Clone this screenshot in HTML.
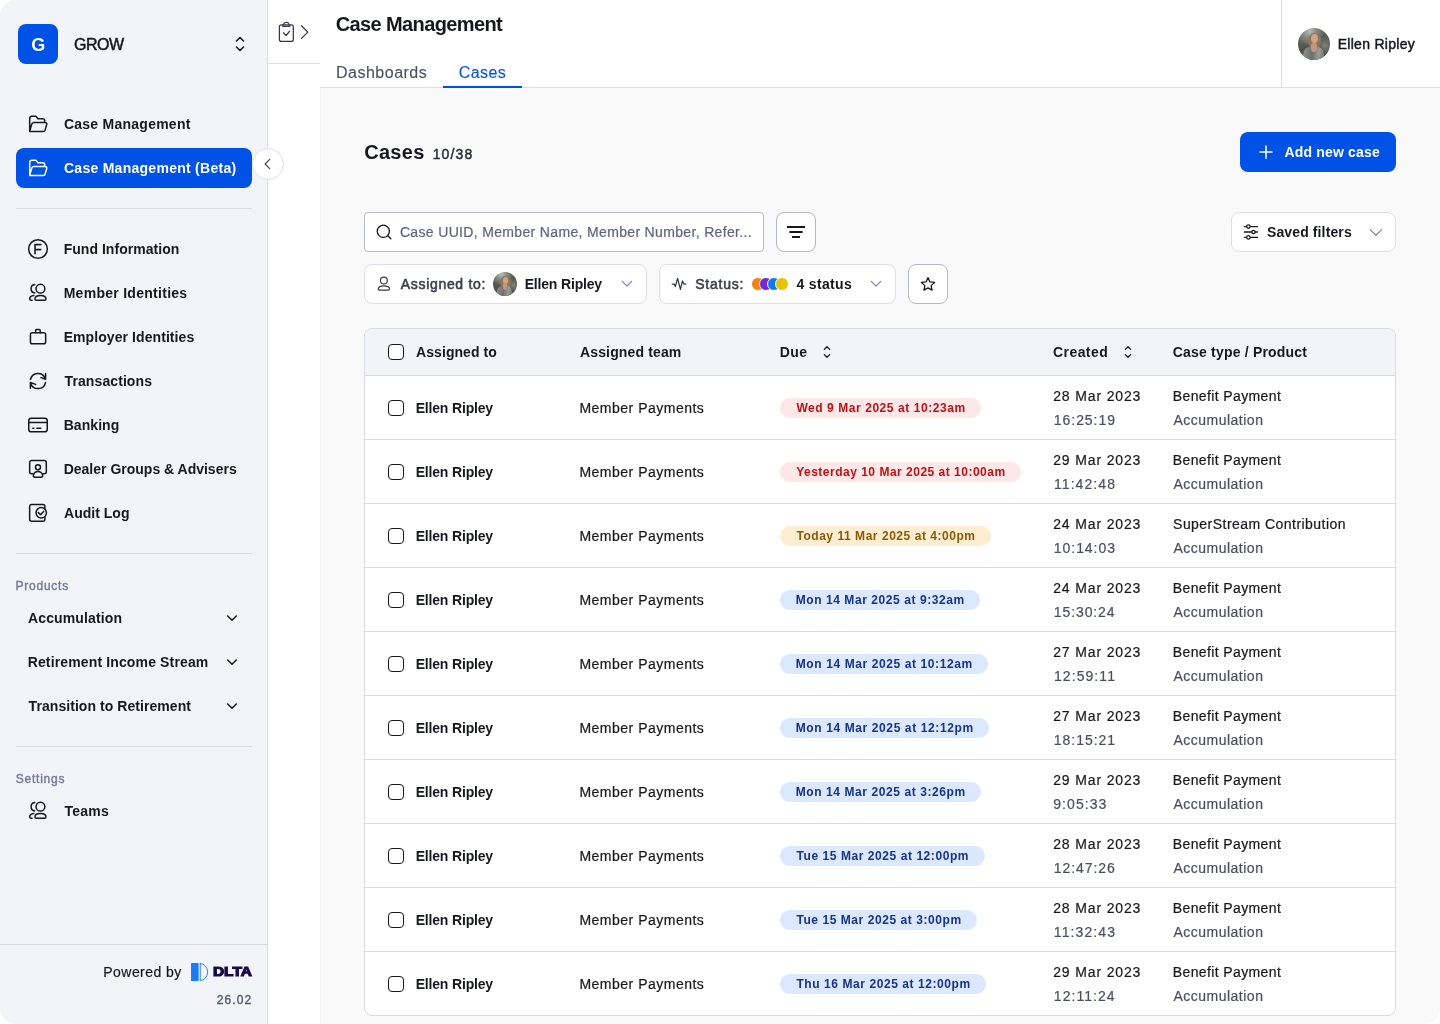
<!DOCTYPE html>
<html lang="en">
<head>
<meta charset="utf-8">
<title>Case Management</title>
<style>
*{box-sizing:border-box;margin:0;padding:0}
html,body{width:1440px;height:1024px;overflow:hidden;background:#fff}
body{font-family:"Liberation Sans",sans-serif;color:#16181d;font-size:14px}
#app{will-change:transform;position:relative;width:1440px;height:1024px;border-radius:16px;overflow:hidden;background:#f9f9fa}
.a,.t,svg{position:absolute}
.t{white-space:nowrap;line-height:20px;height:20px}
.b{font-weight:bold}
.n{-webkit-text-stroke:.2px currentColor}
svg{overflow:visible;fill:none;stroke:#16181d;stroke-width:1.5;stroke-linecap:round;stroke-linejoin:round}
#side{left:0;top:0;width:268px;height:1024px;background:#f3f4f8;border-right:1px solid #dadce4}
#logo{left:18px;top:24px;width:40px;height:40px;border-radius:8px;background:#0052e6}
.hr{position:absolute;left:16px;width:236px;height:1px;background:#dcdde5}
#sel{left:16px;top:148px;width:236px;height:40px;border-radius:8px;background:#0052e6}
#col{left:252px;top:148px;width:32px;height:32px;border-radius:50%;background:#fff;border:1px solid #dddfe6}
#mini{left:268px;top:0;width:52px;height:1024px;background:#fff}
#minib{left:268px;top:63px;width:52px;height:1px;background:#dddfe6}
#head{left:320px;top:0;width:1120px;height:88px;background:#fff;border-bottom:1px solid #dddfe6}
#user{left:1281px;top:0;width:1px;height:87px;background:#dddfe6}
.box{background:#fff;border:1px solid #dddfe6;border-radius:8px;height:40px}
.av{border-radius:50%;overflow:hidden;background:radial-gradient(circle at 36% 10%,#b9beb7 0,#858b82 20%,rgba(96,102,93,0) 42%),radial-gradient(circle at 85% 55%,#7c8279 0,rgba(80,85,78,0) 30%),linear-gradient(160deg,#6d7369,#4d524a 55%,#3f423d)}
.av i{position:absolute;display:block}
.v1{left:31%;top:15%;width:42%;height:50%;border-radius:50%;background:#8f7557}
.v2{left:41%;top:19%;width:23%;height:29%;border-radius:50%;background:#cfa488}
.v3{left:17%;top:56%;width:64%;height:60%;border-radius:45% 45% 0 0;background:linear-gradient(100deg,#8f9291,#6c6f6e 45%,#9a9c9b 70%,#6a6c6b)}
.v4{left:42%;top:46%;width:17%;height:30%;border-radius:30% 30% 50% 50%;background:#c69678}
.dot{top:277px;width:14px;height:14px;border-radius:50%;border:1px solid #fff}
.cb{left:388px;width:16px;height:16px;border:1.5px solid #16181d;border-radius:4px;background:#fff}
.ln{left:365px;width:1030px;height:1px;background:#dadce4}
.bd{left:780px;height:20px;border-radius:10px}
.r{background:#fde7e7}
.y{background:#fdedd1}
.u{background:#dce8fd}
</style>
</head>
<body>
<div id="app">
<div id="side" class="a"></div>
<div id="logo" class="a"></div>
<div class="t b" style="left:31.20px;top:35px;font-size:18px;color:#fff;">G</div>
<div class="t" style="left:74.05px;top:35px;font-size:16px;-webkit-text-stroke:0.5px currentColor;letter-spacing:-0.50px;">GROW</div>
<div id="sel" class="a"></div>
<div class="t b" style="left:63.95px;top:114px;letter-spacing:0.25px;">Case Management</div>
<div class="t b" style="left:63.98px;top:158px;color:#fff;letter-spacing:0.27px;">Case Management (Beta)</div>
<div class="t b" style="left:63.65px;top:239px;letter-spacing:0.04px;">Fund Information</div>
<div class="t b" style="left:63.65px;top:283px;letter-spacing:0.28px;">Member Identities</div>
<div class="t b" style="left:63.65px;top:327px;letter-spacing:0.08px;">Employer Identities</div>
<div class="t b" style="left:64.58px;top:371px;letter-spacing:0.09px;">Transactions</div>
<div class="t b" style="left:63.65px;top:415px;letter-spacing:0.07px;">Banking</div>
<div class="t b" style="left:63.70px;top:459px;">Dealer Groups &amp; Advisers</div>
<div class="t b" style="left:64.10px;top:503px;letter-spacing:0.01px;">Audit Log</div>
<div class="t b" style="left:64.45px;top:801px;letter-spacing:0.25px;">Teams</div>
<div class="hr" style="top:208px"></div>
<div class="hr" style="top:553px"></div>
<div class="hr" style="top:746px"></div>
<div class="t" style="left:15.43px;top:578px;font-size:12px;line-height:16px;height:16px;color:#727b98;-webkit-text-stroke:0.4px currentColor;letter-spacing:0.78px;">Products</div>
<div class="t" style="left:15.70px;top:771px;font-size:12px;line-height:16px;height:16px;color:#727b98;-webkit-text-stroke:0.4px currentColor;letter-spacing:0.78px;">Settings</div>
<div class="t b" style="left:28.06px;top:608px;letter-spacing:0.12px;">Accumulation</div>
<div class="t b" style="left:27.66px;top:652px;letter-spacing:0.14px;">Retirement Income Stream</div>
<div class="t b" style="left:28.59px;top:696px;letter-spacing:0.06px;">Transition to Retirement</div>
<div class="a" style="left:0;top:944px;width:267px;height:1px;background:#d9dbe3"></div>
<div class="t n" style="left:103.30px;top:962px;letter-spacing:0.45px;">Powered by</div>
<div class="t" style="left:216.77px;top:992px;font-size:12px;line-height:16px;height:16px;color:#545a6e;-webkit-text-stroke:0.35px currentColor;letter-spacing:1.12px;">26.02</div>
<div id="mini" class="a"></div><div id="minib" class="a"></div><div id="col" class="a"></div>
<div id="head" class="a"></div><div id="user" class="a"></div><div class="a" style="left:320px;top:88px;width:1px;height:936px;background:#f2f2f4"></div>
<div class="a av" style="left:1298px;top:28px;width:32px;height:32px"><i class="v1"></i><i class="v2"></i><i class="v3"></i><i class="v4"></i></div>
<div class="t b" style="left:335.70px;top:12px;font-size:20px;line-height:24px;height:24px;letter-spacing:-0.61px;">Case Management</div>
<div class="t" style="left:336.05px;top:63px;font-size:16px;color:#4b4f5c;-webkit-text-stroke:0.1px currentColor;letter-spacing:0.49px;">Dashboards</div>
<div class="t" style="left:458.74px;top:63px;font-size:16px;color:#0052e6;-webkit-text-stroke:0.1px currentColor;letter-spacing:0.41px;">Cases</div>
<div class="a" style="left:443px;top:86px;width:79px;height:2px;background:#0052e6"></div>
<div class="t" style="left:1337.66px;top:34px;-webkit-text-stroke:0.45px currentColor;letter-spacing:0.29px;">Ellen Ripley</div>
<div class="t b" style="left:364.20px;top:140px;font-size:20px;line-height:24px;height:24px;letter-spacing:0.29px;">Cases</div>
<div class="t" style="left:432.72px;top:144px;color:#2a2d36;-webkit-text-stroke:0.45px currentColor;letter-spacing:1.11px;">10/38</div>
<div class="a" style="left:1240px;top:132px;width:156px;height:40px;border-radius:8px;background:#0052e6"></div>
<div class="t b" style="left:1284.43px;top:142px;color:#fff;letter-spacing:0.18px;">Add new case</div>
<div class="a box" style="left:364px;top:212px;width:400px;border-radius:4px;border-color:#b5b8c5"></div>
<div class="t n" style="left:399.92px;top:222px;color:#5f6579;letter-spacing:0.34px;">Case UUID, Member Name, Member Number, Refer...</div>
<div class="a box" style="left:776px;top:212px;width:40px;border-color:#b5b8c5"></div>
<div class="a box" style="left:1231px;top:212px;width:165px"></div>
<div class="t b" style="left:1266.98px;top:222px;letter-spacing:0.12px;">Saved filters</div>
<div class="a box" style="left:364px;top:264px;width:283px"></div>
<div class="t" style="left:400.74px;top:274px;color:#3a3e4a;-webkit-text-stroke:0.55px currentColor;letter-spacing:0.69px;">Assigned to:</div>
<div class="a av" style="left:493px;top:272px;width:24px;height:24px"><i class="v1"></i><i class="v2"></i><i class="v3"></i><i class="v4"></i></div>
<div class="t b" style="left:524.65px;top:274px;letter-spacing:-0.17px;">Ellen Ripley</div>
<div class="a box" style="left:659px;top:264px;width:237px"></div>
<div class="t" style="left:695.15px;top:274px;color:#3a3e4a;-webkit-text-stroke:0.55px currentColor;letter-spacing:0.79px;">Status:</div>
<div class="a dot" style="left:751px;background:#f5820f"></div>
<div class="a dot" style="left:759px;background:#7527d9"></div>
<div class="a dot" style="left:767px;background:#1478f0"></div>
<div class="a dot" style="left:775px;background:#e8c500"></div>
<div class="t b" style="left:796.41px;top:274px;letter-spacing:0.34px;">4 status</div>
<div class="a box" style="left:908px;top:264px;width:40px;border-color:#b5b8c5"></div>
<div class="a" style="left:364px;top:328px;width:1032px;height:688px;border:1px solid #d9dbe3;border-radius:8px;background:#fff;overflow:hidden"><div class="a" style="left:0;top:0;width:1032px;height:47px;background:#f3f4f8"></div></div>
<div class="a ln" style="top:375px"></div>
<div class="a ln" style="top:439px"></div>
<div class="a ln" style="top:503px"></div>
<div class="a ln" style="top:567px"></div>
<div class="a ln" style="top:631px"></div>
<div class="a ln" style="top:695px"></div>
<div class="a ln" style="top:759px"></div>
<div class="a ln" style="top:823px"></div>
<div class="a ln" style="top:887px"></div>
<div class="a ln" style="top:951px"></div>
<div class="a cb" style="top:344px"></div>
<div class="t b" style="left:416.08px;top:342px;letter-spacing:0.06px;">Assigned to</div>
<div class="t b" style="left:580.03px;top:342px;letter-spacing:0.14px;">Assigned team</div>
<div class="t b" style="left:779.65px;top:342px;letter-spacing:0.46px;">Due</div>
<div class="t b" style="left:1052.98px;top:342px;letter-spacing:0.44px;">Created</div>
<div class="t b" style="left:1172.72px;top:342px;letter-spacing:0.20px;">Case type / Product</div>
<div class="a cb" style="top:400px"></div>
<div class="t b" style="left:415.65px;top:398px;letter-spacing:-0.17px;">Ellen Ripley</div>
<div class="t n" style="left:579.40px;top:398px;letter-spacing:0.50px;">Member Payments</div>
<div class="a bd r" style="top:398px;width:201px"></div>
<div class="t b" style="left:796.43px;top:398px;font-size:12px;color:#b81418;letter-spacing:0.56px;">Wed 9 Mar 2025 at 10:23am</div>
<div class="t n" style="left:1053.18px;top:386px;letter-spacing:0.86px;">28 Mar 2023</div>
<div class="t n" style="left:1053.86px;top:410px;color:#4b4f5c;letter-spacing:0.94px;">16:25:19</div>
<div class="t n" style="left:1172.79px;top:386px;letter-spacing:0.38px;">Benefit Payment</div>
<div class="t n" style="left:1173.49px;top:410px;color:#4b4f5c;letter-spacing:0.49px;">Accumulation</div>
<div class="a cb" style="top:464px"></div>
<div class="t b" style="left:415.65px;top:462px;letter-spacing:-0.17px;">Ellen Ripley</div>
<div class="t n" style="left:579.40px;top:462px;letter-spacing:0.50px;">Member Payments</div>
<div class="a bd r" style="top:462px;width:241px"></div>
<div class="t b" style="left:796.16px;top:462px;font-size:12px;color:#b81418;letter-spacing:0.50px;">Yesterday 10 Mar 2025 at 10:00am</div>
<div class="t n" style="left:1053.18px;top:450px;letter-spacing:0.86px;">29 Mar 2023</div>
<div class="t n" style="left:1053.99px;top:474px;color:#4b4f5c;letter-spacing:1.07px;">11:42:48</div>
<div class="t n" style="left:1172.79px;top:450px;letter-spacing:0.38px;">Benefit Payment</div>
<div class="t n" style="left:1173.49px;top:474px;color:#4b4f5c;letter-spacing:0.49px;">Accumulation</div>
<div class="a cb" style="top:528px"></div>
<div class="t b" style="left:415.65px;top:526px;letter-spacing:-0.17px;">Ellen Ripley</div>
<div class="t n" style="left:579.40px;top:526px;letter-spacing:0.50px;">Member Payments</div>
<div class="a bd y" style="top:526px;width:211px"></div>
<div class="t b" style="left:796.45px;top:526px;font-size:12px;color:#8a5a08;letter-spacing:0.54px;">Today 11 Mar 2025 at 4:00pm</div>
<div class="t n" style="left:1053.18px;top:514px;letter-spacing:0.86px;">24 Mar 2023</div>
<div class="t n" style="left:1053.86px;top:538px;color:#4b4f5c;letter-spacing:0.94px;">10:14:03</div>
<div class="t n" style="left:1173.08px;top:514px;letter-spacing:0.46px;">SuperStream Contribution</div>
<div class="t n" style="left:1173.49px;top:538px;color:#4b4f5c;letter-spacing:0.49px;">Accumulation</div>
<div class="a cb" style="top:592px"></div>
<div class="t b" style="left:415.65px;top:590px;letter-spacing:-0.17px;">Ellen Ripley</div>
<div class="t n" style="left:579.40px;top:590px;letter-spacing:0.50px;">Member Payments</div>
<div class="a bd u" style="top:590px;width:200px"></div>
<div class="t b" style="left:795.69px;top:590px;font-size:12px;color:#14348a;letter-spacing:0.57px;">Mon 14 Mar 2025 at 9:32am</div>
<div class="t n" style="left:1053.18px;top:578px;letter-spacing:0.86px;">24 Mar 2023</div>
<div class="t n" style="left:1053.87px;top:602px;color:#4b4f5c;letter-spacing:0.89px;">15:30:24</div>
<div class="t n" style="left:1172.79px;top:578px;letter-spacing:0.38px;">Benefit Payment</div>
<div class="t n" style="left:1173.49px;top:602px;color:#4b4f5c;letter-spacing:0.49px;">Accumulation</div>
<div class="a cb" style="top:656px"></div>
<div class="t b" style="left:415.65px;top:654px;letter-spacing:-0.17px;">Ellen Ripley</div>
<div class="t n" style="left:579.40px;top:654px;letter-spacing:0.50px;">Member Payments</div>
<div class="a bd u" style="top:654px;width:208px"></div>
<div class="t b" style="left:795.78px;top:654px;font-size:12px;color:#14348a;letter-spacing:0.60px;">Mon 14 Mar 2025 at 10:12am</div>
<div class="t n" style="left:1053.18px;top:642px;letter-spacing:0.86px;">27 Mar 2023</div>
<div class="t n" style="left:1053.99px;top:666px;color:#4b4f5c;letter-spacing:1.07px;">12:59:11</div>
<div class="t n" style="left:1172.79px;top:642px;letter-spacing:0.38px;">Benefit Payment</div>
<div class="t n" style="left:1173.49px;top:666px;color:#4b4f5c;letter-spacing:0.49px;">Accumulation</div>
<div class="a cb" style="top:720px"></div>
<div class="t b" style="left:415.65px;top:718px;letter-spacing:-0.17px;">Ellen Ripley</div>
<div class="t n" style="left:579.40px;top:718px;letter-spacing:0.50px;">Member Payments</div>
<div class="a bd u" style="top:718px;width:209px"></div>
<div class="t b" style="left:795.74px;top:718px;font-size:12px;color:#14348a;letter-spacing:0.61px;">Mon 14 Mar 2025 at 12:12pm</div>
<div class="t n" style="left:1053.18px;top:706px;letter-spacing:0.86px;">27 Mar 2023</div>
<div class="t n" style="left:1053.85px;top:730px;color:#4b4f5c;letter-spacing:0.95px;">18:15:21</div>
<div class="t n" style="left:1172.79px;top:706px;letter-spacing:0.38px;">Benefit Payment</div>
<div class="t n" style="left:1173.49px;top:730px;color:#4b4f5c;letter-spacing:0.49px;">Accumulation</div>
<div class="a cb" style="top:784px"></div>
<div class="t b" style="left:415.65px;top:782px;letter-spacing:-0.17px;">Ellen Ripley</div>
<div class="t n" style="left:579.40px;top:782px;letter-spacing:0.50px;">Member Payments</div>
<div class="a bd u" style="top:782px;width:201px"></div>
<div class="t b" style="left:795.74px;top:782px;font-size:12px;color:#14348a;letter-spacing:0.58px;">Mon 14 Mar 2025 at 3:26pm</div>
<div class="t n" style="left:1053.18px;top:770px;letter-spacing:0.86px;">29 Mar 2023</div>
<div class="t n" style="left:1053.28px;top:794px;color:#4b4f5c;letter-spacing:1.05px;">9:05:33</div>
<div class="t n" style="left:1172.79px;top:770px;letter-spacing:0.38px;">Benefit Payment</div>
<div class="t n" style="left:1173.49px;top:794px;color:#4b4f5c;letter-spacing:0.49px;">Accumulation</div>
<div class="a cb" style="top:848px"></div>
<div class="t b" style="left:415.65px;top:846px;letter-spacing:-0.17px;">Ellen Ripley</div>
<div class="t n" style="left:579.40px;top:846px;letter-spacing:0.50px;">Member Payments</div>
<div class="a bd u" style="top:846px;width:205px"></div>
<div class="t b" style="left:796.59px;top:846px;font-size:12px;color:#14348a;letter-spacing:0.56px;">Tue 15 Mar 2025 at 12:00pm</div>
<div class="t n" style="left:1053.18px;top:834px;letter-spacing:0.86px;">28 Mar 2023</div>
<div class="t n" style="left:1053.87px;top:858px;color:#4b4f5c;letter-spacing:0.92px;">12:47:26</div>
<div class="t n" style="left:1172.79px;top:834px;letter-spacing:0.38px;">Benefit Payment</div>
<div class="t n" style="left:1173.49px;top:858px;color:#4b4f5c;letter-spacing:0.49px;">Accumulation</div>
<div class="a cb" style="top:912px"></div>
<div class="t b" style="left:415.65px;top:910px;letter-spacing:-0.17px;">Ellen Ripley</div>
<div class="t n" style="left:579.40px;top:910px;letter-spacing:0.50px;">Member Payments</div>
<div class="a bd u" style="top:910px;width:197px"></div>
<div class="t b" style="left:796.45px;top:910px;font-size:12px;color:#14348a;letter-spacing:0.56px;">Tue 15 Mar 2025 at 3:00pm</div>
<div class="t n" style="left:1053.18px;top:898px;letter-spacing:0.86px;">28 Mar 2023</div>
<div class="t n" style="left:1053.85px;top:922px;color:#4b4f5c;letter-spacing:1.09px;">11:32:43</div>
<div class="t n" style="left:1172.79px;top:898px;letter-spacing:0.38px;">Benefit Payment</div>
<div class="t n" style="left:1173.49px;top:922px;color:#4b4f5c;letter-spacing:0.49px;">Accumulation</div>
<div class="a cb" style="top:976px"></div>
<div class="t b" style="left:415.65px;top:974px;letter-spacing:-0.17px;">Ellen Ripley</div>
<div class="t n" style="left:579.40px;top:974px;letter-spacing:0.50px;">Member Payments</div>
<div class="a bd u" style="top:974px;width:206px"></div>
<div class="t b" style="left:796.47px;top:974px;font-size:12px;color:#14348a;letter-spacing:0.57px;">Thu 16 Mar 2025 at 12:00pm</div>
<div class="t n" style="left:1053.18px;top:962px;letter-spacing:0.86px;">29 Mar 2023</div>
<div class="t n" style="left:1053.87px;top:986px;color:#4b4f5c;letter-spacing:1.04px;">12:11:24</div>
<div class="t n" style="left:1172.79px;top:962px;letter-spacing:0.38px;">Benefit Payment</div>
<div class="t n" style="left:1173.49px;top:986px;color:#4b4f5c;letter-spacing:0.49px;">Accumulation</div>
<svg width="1440" height="1024" viewBox="0 0 1440 1024" style="left:0;top:0"><g transform="translate(26 112)"><path d="M3.700 19.300V6.300a2 2 0 0 1 2-2h3.900a1 1 0 0 1 .8.400l1.600 2.100h4.700a2 2 0 0 1 2 2v1.500M3.700 19.450l1.900-6.950a2.500 2.500 0 0 1 2.400-1.900h11.300a1.500 1.500 0 0 1 1.450 1.900l-1.700 5.650a1.900 1.900 0 0 1-1.800 1.300H3.700z"/></g><g transform="translate(26 156)" stroke="#fff"><path d="M3.700 19.300V6.300a2 2 0 0 1 2-2h3.900a1 1 0 0 1 .8.400l1.600 2.100h4.700a2 2 0 0 1 2 2v1.500M3.700 19.450l1.900-6.950a2.500 2.500 0 0 1 2.400-1.900h11.300a1.500 1.500 0 0 1 1.450 1.900l-1.700 5.650a1.900 1.900 0 0 1-1.800 1.300H3.700z"/></g><g transform="translate(26 237)"><circle cx="12" cy="12" r="9.350"/></g><g transform="translate(26 281)"><circle cx="14.450" cy="7.700" r="4.400"/><path d="M8.950 17.900c0-1.900 2.400-3.300 5.500-3.300s5.500 1.400 5.500 3.300a1.400 1.400 0 0 1-1.400 1.400h-8.200a1.400 1.400 0 0 1-1.400-1.400zM8.700 3.500a4.250 4.250 0 0 0 0 8.400M7.900 14.600c-2.200.2-4.100 1.300-4.200 3.200a1.500 1.500 0 0 0 1.500 1.500h.9"/></g><g transform="translate(26 325)"><rect x="4.450" y="7.700" width="15.200" height="11" rx="1.800"/><path d="M9.600 7.700V5.400a1 1 0 0 1 1-1h2.600a1 1 0 0 1 1 1v2.300"/></g><g transform="translate(26 369)"><path d="M4.500 10.400A7.700 7.700 0 0 1 19.300 9.600M19.600 4.600v5.700l-4.700-1.800M19.500 13.600A7.700 7.700 0 0 1 4.700 14.400M4.400 19.200v-5.700l5.200 1.900"/></g><g transform="translate(26 413)"><rect x="2.750" y="5.200" width="18.500" height="13.650" rx="2.600"/><path d="M2.750 9.450h18.500M6.800 15.200h1.100M10.900 15.200h3.900"/></g><g transform="translate(26 457)"><path d="M7 16.800H5.650a2 2 0 0 1-2-2V5.500a2 2 0 0 1 2-2h12.650a2 2 0 0 1 2 2v9.300a2 2 0 0 1-2 2H17"/><circle cx="11.970" cy="10.200" r="2.500"/><path d="M9 20.200h6a1.700 1.700 0 0 0 1.600-2.300c-.7-2-2.500-3.300-4.600-3.300s-3.900 1.300-4.600 3.300A1.700 1.700 0 0 0 9 20.200z"/></g><g transform="translate(26 501)"><path d="M18.900 7.300V5.500a2 2 0 0 0-2-2H5.650a2 2 0 0 0-2 2v12.750a2 2 0 0 0 2 2H16.900a2 2 0 0 0 2-2v-1.900"/><circle cx="15.250" cy="11.800" r="5.200"/><path d="M12.300 11.600l2.200 2.200 3.100-3.400"/></g><g transform="translate(26 799)"><circle cx="14.450" cy="7.700" r="4.400"/><path d="M8.950 17.900c0-1.900 2.400-3.300 5.500-3.300s5.500 1.400 5.500 3.300a1.400 1.400 0 0 1-1.400 1.400h-8.200a1.400 1.400 0 0 1-1.400-1.400zM8.700 3.500a4.250 4.250 0 0 0 0 8.400M7.900 14.600c-2.200.2-4.100 1.300-4.200 3.200a1.500 1.500 0 0 0 1.500 1.500h.9"/></g><path d="M236.500 41 240 37.500l3.500 3.500M236.500 47 240 50.500l3.500-3.500" stroke-width="1.600"/><path d="M227.700 616 232 620.3l4.300-4.300" stroke-width="1.500"/><path d="M227.700 660 232 664.3l4.300-4.300" stroke-width="1.500"/><path d="M227.700 704 232 708.3l4.300-4.300" stroke-width="1.500"/><g stroke="#353846" stroke-width="1.250"><rect x="279.400" y="24.800" width="13.900" height="16.600" rx="2"/><path d="M282.700 26.300l1-2.200a2.600 2.600 0 0 1 2.400-1.600h.4a2.600 2.600 0 0 1 2.400 1.600l1 2.200zM283.400 32.800l2.700 2.700 3.600-4.300"/><path d="M301.500 25.700l6.300 6.400-6.300 6.300"/></g><path d="M269.700 159.400 265.100 164l4.600 4.600" stroke="#4b4f5c" stroke-width="1.300"/><path d="M1266 146v12.200M1259.900 152.100h12.200" stroke="#fff" stroke-width="1.500"/><g stroke-width="1.300"><circle cx="383.300" cy="231.300" r="6.100"/><path d="M387.700 235.700l3.200 3.100"/></g><path d="M787 227h18M789.400 232h13.200M792 237h8" stroke-width="1.900" stroke-linecap="butt"/><g stroke-width="1.350"><path d="M1244.500 226.600h13M1244.500 232h13M1244.500 237.400h13"/><g fill="#fff" stroke-width="1.200"><circle cx="1248.400" cy="226.600" r="1.700"/><circle cx="1253.500" cy="232" r="1.700"/><circle cx="1248.400" cy="237.400" r="1.700"/></g></g><g stroke="#7f88a4" stroke-width="1.300"><path d="M1370.300 229.600l5.650 5.600 5.650-5.600"/><path d="M622.300 281.400l4.700 4.700 4.700-4.700"/><path d="M871.300 281.400l4.700 4.700 4.700-4.700"/></g><g stroke="#3a3e4a" stroke-width="1.200"><circle cx="383.900" cy="280.500" r="3.450"/><path d="M378.300 289c0-1.700 2.400-3.100 5.600-3.100s5.600 1.400 5.600 3.100a1.100 1.100 0 0 1-1.100 1.100h-9a1.100 1.100 0 0 1-1.100-1.100z"/></g><path d="M672.200 284h2l1.100 2.600 2.300-8.200 2.800 11.000 2.100-8.500 1.400 3.100h1.900" stroke="#353846" stroke-width="1.250"/><path d="M928.00 277.70L929.94 281.93L934.56 282.47L931.14 285.62L932.06 290.18L928.00 287.90L923.94 290.18L924.86 285.62L921.44 282.47L926.06 281.93z" stroke-width="1.300"/><path d="M824.3 349.400 827 346.700l2.700 2.700M824.3 354.600 827 357.300l2.700-2.700" stroke-width="1.300"/><path d="M1125.3 349.400 1128 346.700l2.700 2.700M1125.3 354.600 1128 357.300l2.700-2.700" stroke-width="1.300"/><rect x="191" y="963.100" width="7.600" height="17.900" rx=".6" fill="#1a7bff" stroke="none"/><path d="M200.250 963.550v17a7.400 8.500 0 0 0 0-17z" stroke="#1a7bff" stroke-width=".9"/></svg>
<div class="t" style="left:33.30px;top:239px;-webkit-text-stroke:0.4px currentColor;">F</div>
<div class="t b" style="left:213.02px;top:962px;font-size:12.5px;color:#160a47;-webkit-text-stroke:1.1px currentColor;transform-origin:0 50%;transform:scaleX(1.232);">DLTA</div>
</div>
</body>
</html>
